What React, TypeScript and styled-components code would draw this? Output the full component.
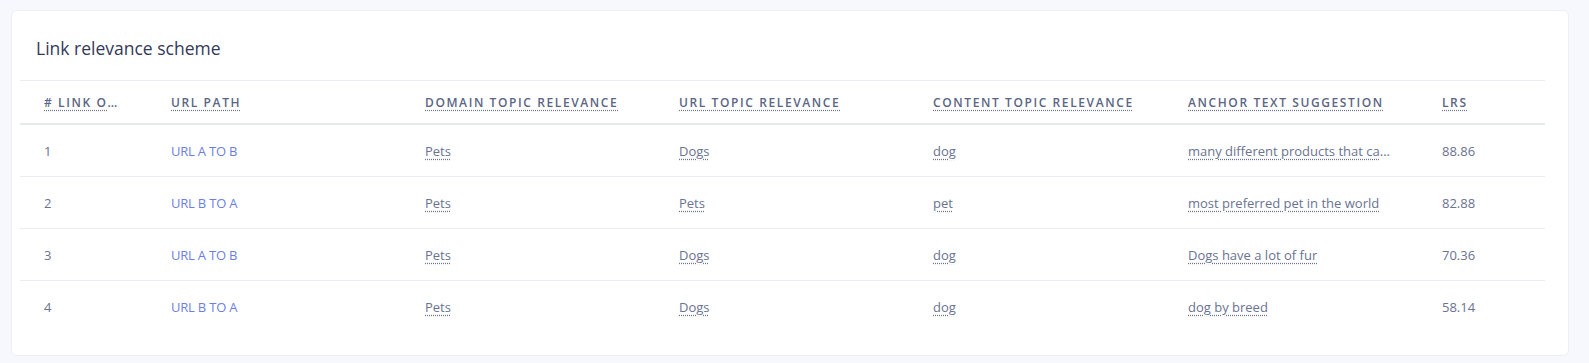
import styled, { createGlobalStyle } from 'styled-components';

const GlobalStyle = createGlobalStyle`
  body {
    margin: 0;
    background: #f6f8fd;
    font-family: 'Open Sans', 'Noto Sans', sans-serif;
  }
`;

type Row = {
  id: number;
  path: string;
  domain: string;
  url: string;
  content: string;
  anchor: string;
  lrs: string;
};

const rows: Row[] = [
  { id: 1, path: 'URL A TO B', domain: 'Pets', url: 'Dogs', content: 'dog', anchor: 'many different products that can be bought for dogs', lrs: '88.86' },
  { id: 2, path: 'URL B TO A', domain: 'Pets', url: 'Pets', content: 'pet', anchor: 'most preferred pet in the world', lrs: '82.88' },
  { id: 3, path: 'URL A TO B', domain: 'Pets', url: 'Dogs', content: 'dog', anchor: 'Dogs have a lot of fur', lrs: '70.36' },
  { id: 4, path: 'URL B TO A', domain: 'Pets', url: 'Dogs', content: 'dog', anchor: 'dog by breed', lrs: '58.14' },
];

const headers = [
  '# Link order',
  'URL path',
  'Domain topic relevance',
  'URL topic relevance',
  'Content topic relevance',
  'Anchor text suggestion',
  'LRS',
];

const widths = [127, 254, 254, 254, 255, 254];

const App = () => {
  return (
    <Page>
      <GlobalStyle />
      <Card>
        <Title>Link relevance scheme</Title>
        <Table>
          <colgroup>
            {widths.map((w, i) => (
              <col key={i} style={{ width: w }} />
            ))}
            <col />
          </colgroup>
          <thead>
            <tr>
              {headers.map((h) => (
                <HeadCell key={h}>
                  <Dotted>{h}</Dotted>
                </HeadCell>
              ))}
            </tr>
          </thead>
          <tbody>
            {rows.map((r) => (
              <BodyRow key={r.id}>
                <Cell>{r.id}</Cell>
                <Cell>
                  <PathLink href='#'>{r.path}</PathLink>
                </Cell>
                <Cell>
                  <Dotted>{r.domain}</Dotted>
                </Cell>
                <Cell>
                  <Dotted>{r.url}</Dotted>
                </Cell>
                <Cell>
                  <Dotted>{r.content}</Dotted>
                </Cell>
                <Cell>
                  <Dotted>{r.anchor}</Dotted>
                </Cell>
                <Cell>{r.lrs}</Cell>
              </BodyRow>
            ))}
          </tbody>
        </Table>
      </Card>
    </Page>
  );
};

export default App;

const Page = styled.div`
  padding: 10px 20px 7px 11px;
`;

const Card = styled.section`
  background: #ffffff;
  border: 1px solid #eceff5;
  border-radius: 6px;
  padding: 0 23px 23px 8px;
`;

const Title = styled.h2`
  margin: 0;
  padding: 25px 0 20px 16px;
  font-size: 17.5px;
  line-height: 24px;
  font-weight: 500;
  color: #343859;
`;

const Table = styled.table`
  width: 100%;
  table-layout: fixed;
  border-collapse: collapse;
  border-top: 1px solid #e9ecf1;
`;

const HeadCell = styled.th`
  height: 42px;
  padding: 0 24px;
  text-align: left;
  vertical-align: middle;
  font-size: 12px;
  font-weight: 600;
  letter-spacing: 1.6px;
  text-transform: uppercase;
  color: #5b6585;
  white-space: nowrap;
  overflow: hidden;
  text-overflow: ellipsis;
  border-bottom: 2px solid #e6e9ef;
`;

const BodyRow = styled.tr`
  border-bottom: 1px solid #e9ecf1;

  &:last-child {
    border-bottom: none;
  }
`;

const Cell = styled.td`
  height: 51px;
  padding: 0 24px;
  vertical-align: middle;
  font-size: 13px;
  color: #6a7391;
  white-space: nowrap;
  overflow: hidden;
  text-overflow: ellipsis;
`;

const Dotted = styled.span`
  text-decoration: underline dotted;
  text-decoration-color: #6a7391;
  text-underline-offset: 3px;
`;

const PathLink = styled.a`
  color: #6d7fe4;
  text-decoration: none;
  letter-spacing: -0.2px;
`;
